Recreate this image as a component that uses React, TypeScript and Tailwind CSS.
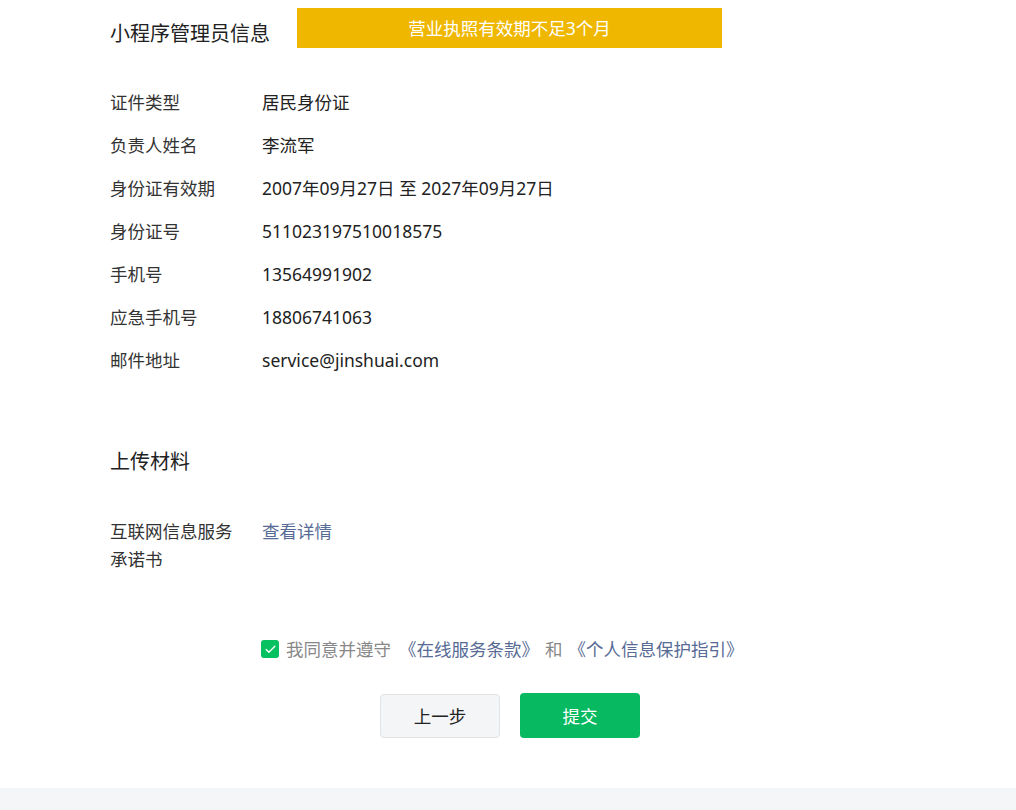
import { Check } from 'lucide-react';

const rows = [
  { label: '证件类型', value: '居民身份证' },
  { label: '负责人姓名', value: '李流军' },
  { label: '身份证有效期', value: '2007年09月27日 至 2027年09月27日' },
  { label: '身份证号', value: '511023197510018575' },
  { label: '手机号', value: '13564991902' },
  { label: '应急手机号', value: '18806741063' },
  { label: '邮件地址', value: 'service@jinshuai.com' },
];

export default function App() {
  return (
    <div
      className="w-[1016px] h-[810px] bg-white flex flex-col text-[#333] overflow-hidden"
      style={{ fontFamily: '"Noto Sans", "Noto Sans CJK SC", sans-serif' }}
    >
      <div className="flex-1 pl-[110px]">
        {/* header */}
        <div className="flex items-start h-[60px]">
          <h2 className="text-[20px] leading-[24px] mt-[22px] text-[#222] w-[187px]">小程序管理员信息</h2>
          <div className="mt-[8px] w-[425px] h-[40px] bg-[#efb700] text-white text-[17.5px] flex items-center justify-center">
            营业执照有效期不足3个月
          </div>
        </div>

        {/* admin info */}
        <div className="mt-[21px] flex flex-col">
          {rows.map((r) => (
            <div key={r.label} className="flex h-[43px] items-center text-[17.5px]">
              <div className="w-[152px] text-[#333]">{r.label}</div>
              <div className="text-[#222]">{r.value}</div>
            </div>
          ))}
        </div>

        {/* uploads */}
        <h2 className="mt-[68px] text-[20px] leading-[24px] text-[#222]">上传材料</h2>
        <div className="mt-[43px] flex text-[17.5px] leading-[28px]">
          <div className="w-[124px] mr-[28px] text-[#333]">互联网信息服务承诺书</div>
          <a className="text-[#576b95] cursor-pointer">查看详情</a>
        </div>

        {/* agreement */}
        <div className="mt-[63px] ml-[151px] flex items-center text-[17.5px]">
          <span className="w-[18px] h-[18px] rounded-[3px] bg-[#07c160] flex items-center justify-center mr-[7px]">
            <Check className="w-[13px] h-[13px] text-white" strokeWidth={2.5} />
          </span>
          <span className="text-[#888]">我同意并遵守</span>
          <a className="text-[#576b95] ml-[8px]">《在线服务条款》</a>
          <span className="text-[#888] ml-[6px]">和</span>
          <a className="text-[#576b95] ml-[6px]">《个人信息保护指引》</a>
        </div>

        {/* buttons */}
        <div className="mt-[32px] ml-[270px] flex gap-[20px]">
          <button className="w-[120px] h-[44px] rounded-[4px] bg-[#f4f5f7] border border-[#e2e3e5] text-[17.5px] text-[#222]">
            上一步
          </button>
          <button className="w-[120px] h-[45px] -mt-[1px] rounded-[4px] bg-[#07b960] text-[17.5px] text-white">
            提交
          </button>
        </div>
      </div>
      <div className="h-[22px] bg-[#f5f6f8]" />
    </div>
  );
}
